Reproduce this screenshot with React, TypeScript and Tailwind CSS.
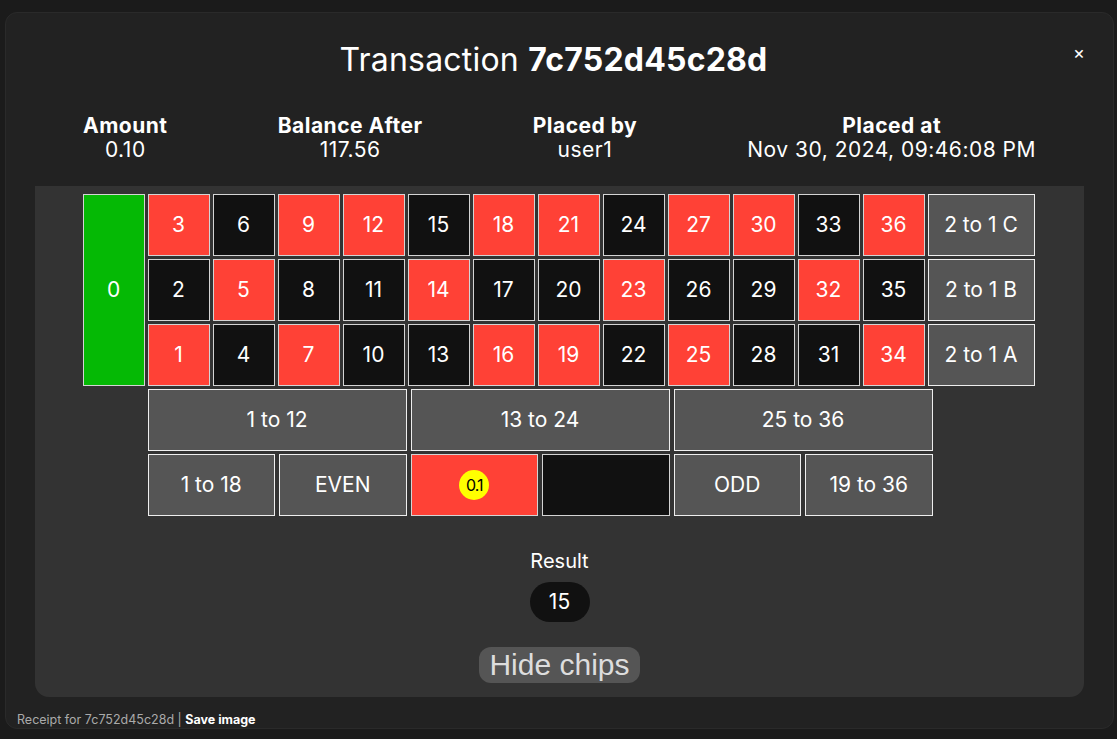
const RED = new Set([1, 3, 5, 7, 9, 12, 14, 16, 18, 19, 21, 23, 25, 27, 30, 32, 34, 36])

const FONT = { fontFamily: 'Inter, "Noto Sans", sans-serif' }

const cell = 'flex items-center justify-center border border-[#d4d4d4] text-[21px] text-white'
const grey = `${cell} h-[62px] border-[#eee] bg-[#555]`

function NumberCell({ n }: { n: number }) {
  return (
    <div className={`${cell} h-[62px] ${RED.has(n) ? 'bg-[#ff4136]' : 'bg-[#111]'}`}>
      {n}
    </div>
  )
}

export default function App() {
  const rows = [3, 2, 1].map((start) => Array.from({ length: 12 }, (_, i) => start + i * 3))

  return (
    <div className="min-h-screen bg-[#1b1b1b] pt-[12px] pl-[5px]" style={FONT}>
      <div className="relative flex w-[1109px] flex-col rounded-[12px] border border-[#2a2a2a] bg-[#222] px-[29px] text-white">
        <button className="absolute right-[28px] top-[31px] text-[18px] leading-none text-white">
          ×
        </button>

        {/* title */}
        <h1 className="mr-[12px] pt-[25px] text-center text-[32px] leading-[44px] tracking-[0.2px]">
          Transaction <span className="font-bold">7c752d45c28d</span>
        </h1>

        {/* info row */}
        <div className="mt-[32px] flex justify-between px-[48px] text-center text-[21px] leading-[24px] tracking-[0.5px]">
          <div>
            <div className="font-bold">Amount</div>
            <div>0.10</div>
          </div>
          <div>
            <div className="font-bold">Balance After</div>
            <div>117.56</div>
          </div>
          <div>
            <div className="font-bold">Placed by</div>
            <div>user1</div>
          </div>
          <div>
            <div className="font-bold">Placed at</div>
            <div>Nov 30, 2024, 09:46:08 PM</div>
          </div>
        </div>

        {/* receipt panel */}
        <div className="mt-[24px] flex h-[511px] shrink-0 flex-col items-center rounded-b-[14px] bg-[#333] pt-[8px]">
          <div className="mr-[2px] grid grid-cols-[62px_repeat(12,62px)_107px] gap-[3px]">
            <div className={`${cell} row-span-3 bg-[#05b905]`}>0</div>
            {rows[0].map((n) => (
              <NumberCell key={n} n={n} />
            ))}
            <div className={grey}>2 to 1 C</div>
            {rows[1].map((n) => (
              <NumberCell key={n} n={n} />
            ))}
            <div className={grey}>2 to 1 B</div>
            {rows[2].map((n) => (
              <NumberCell key={n} n={n} />
            ))}
            <div className={grey}>2 to 1 A</div>

            {/* outside bets */}
            <div className="col-span-13 col-start-2 flex w-[785px] flex-col gap-[3px]">
              <div className="grid grid-cols-3 gap-[4px]">
                <div className={grey}>1 to 12</div>
                <div className={grey}>13 to 24</div>
                <div className={grey}>25 to 36</div>
              </div>
              <div className="grid grid-cols-6 gap-[4px]">
                <div className={grey}>1 to 18</div>
                <div className={grey}>EVEN</div>
                <div className={`${cell} h-[62px] bg-[#ff4136]`}>
                  <span className="flex h-[30px] w-[30px] items-center justify-center rounded-full bg-[#ffff00] text-[16px] tracking-[-1px] text-black">
                    0.1
                  </span>
                </div>
                <div className={`${cell} h-[62px] bg-[#111]`}></div>
                <div className={grey}>ODD</div>
                <div className={grey}>19 to 36</div>
              </div>
            </div>
          </div>

          {/* result */}
          <div className="mt-[33px] text-[20px] leading-[24px]">Result</div>
          <div className="mt-[9px] flex h-[40px] w-[60px] items-center justify-center rounded-full bg-[#111] text-[21px]">
            15
          </div>

          <button
            className="mt-[25px] h-[36px] rounded-[12px] bg-[#555] px-[10px] text-[30px] leading-[36px] text-[#ddd]"
            style={{ fontFamily: '"Liberation Sans", Arial, sans-serif' }}
          >
            Hide chips
          </button>
        </div>

        {/* footer */}
        <div className="ml-[-18px] mt-[15px] text-[12.5px] leading-[16px] text-[#aaa]">
          Receipt for 7c752d45c28d | <span className="font-bold text-white">Save image</span>
        </div>
      </div>
    </div>
  )
}
